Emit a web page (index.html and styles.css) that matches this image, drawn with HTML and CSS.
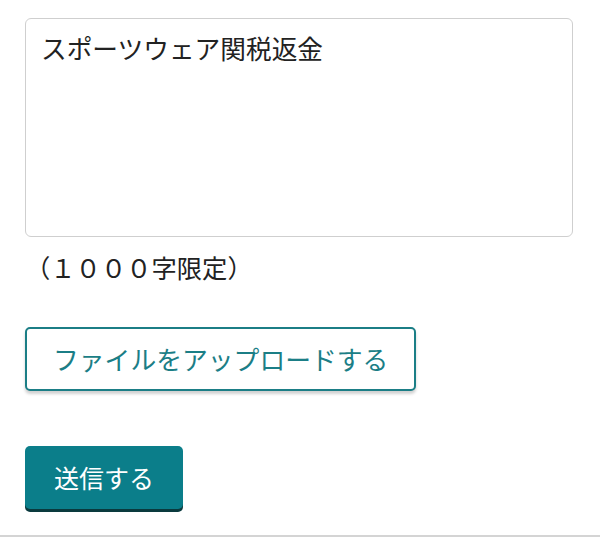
FILE: index.html
```html
<!DOCTYPE html>
<html lang="ja">
<head>
<meta charset="utf-8">
<link rel="stylesheet" href="styles.css">
</head>
<body>
<div class="page">
  <form class="form">
    <textarea class="message">スポーツウェア関税返金</textarea>
    <p class="limit">（１０００字限定）</p>
    <button type="button" class="upload">ファイルをアップロードする</button>
    <button type="button" class="submit">送信する</button>
  </form>
</div>
</body>
</html>
```

FILE: styles.css
```css
html, body {
  margin: 0;
  padding: 0;
  background: #fff;
}
body {
  font-family: "Noto Sans CJK JP", "Noto Sans", sans-serif;
  color: #222;
}
.page {
  box-sizing: border-box;
  height: 537px;
  border-bottom: 2px solid #d4d4d4;
}
.form {
  display: flex;
  flex-direction: column;
  align-items: flex-start;
  padding: 18px 27px 0 25px;
}
.message {
  box-sizing: border-box;
  width: 548px;
  height: 219px;
  border: 1px solid #cfcfcf;
  border-radius: 6px;
  padding: 11px 15px;
  font-family: inherit;
  font-size: 25.7px;
  line-height: 1.4;
  color: #222;
  resize: none;
  outline: none;
  margin: 0;
}
.limit {
  margin: 13px 0 0 0;
  font-size: 25.3px;
  line-height: 1.4;
  color: #222;
}
.upload {
  margin-top: 42px;
  box-sizing: border-box;
  height: 64px;
  padding: 0 26px 2px 26px;
  background: #fff;
  border: 2px solid #1b7e86;
  border-radius: 5px;
  color: #1b7e86;
  font-family: inherit;
  font-size: 25.8px;
  box-shadow: 0 3px 3px rgba(0,0,0,0.18);
  cursor: pointer;
}
.submit {
  margin-top: 55px;
  box-sizing: border-box;
  width: 158px;
  height: 63px;
  padding: 0 0 2px;
  background: #0b7e8a;
  border: none;
  border-radius: 5px;
  color: #fff;
  font-family: inherit;
  font-size: 25px;
  box-shadow: 0 3px 0 #0a3a3e;
  cursor: pointer;
}
```
